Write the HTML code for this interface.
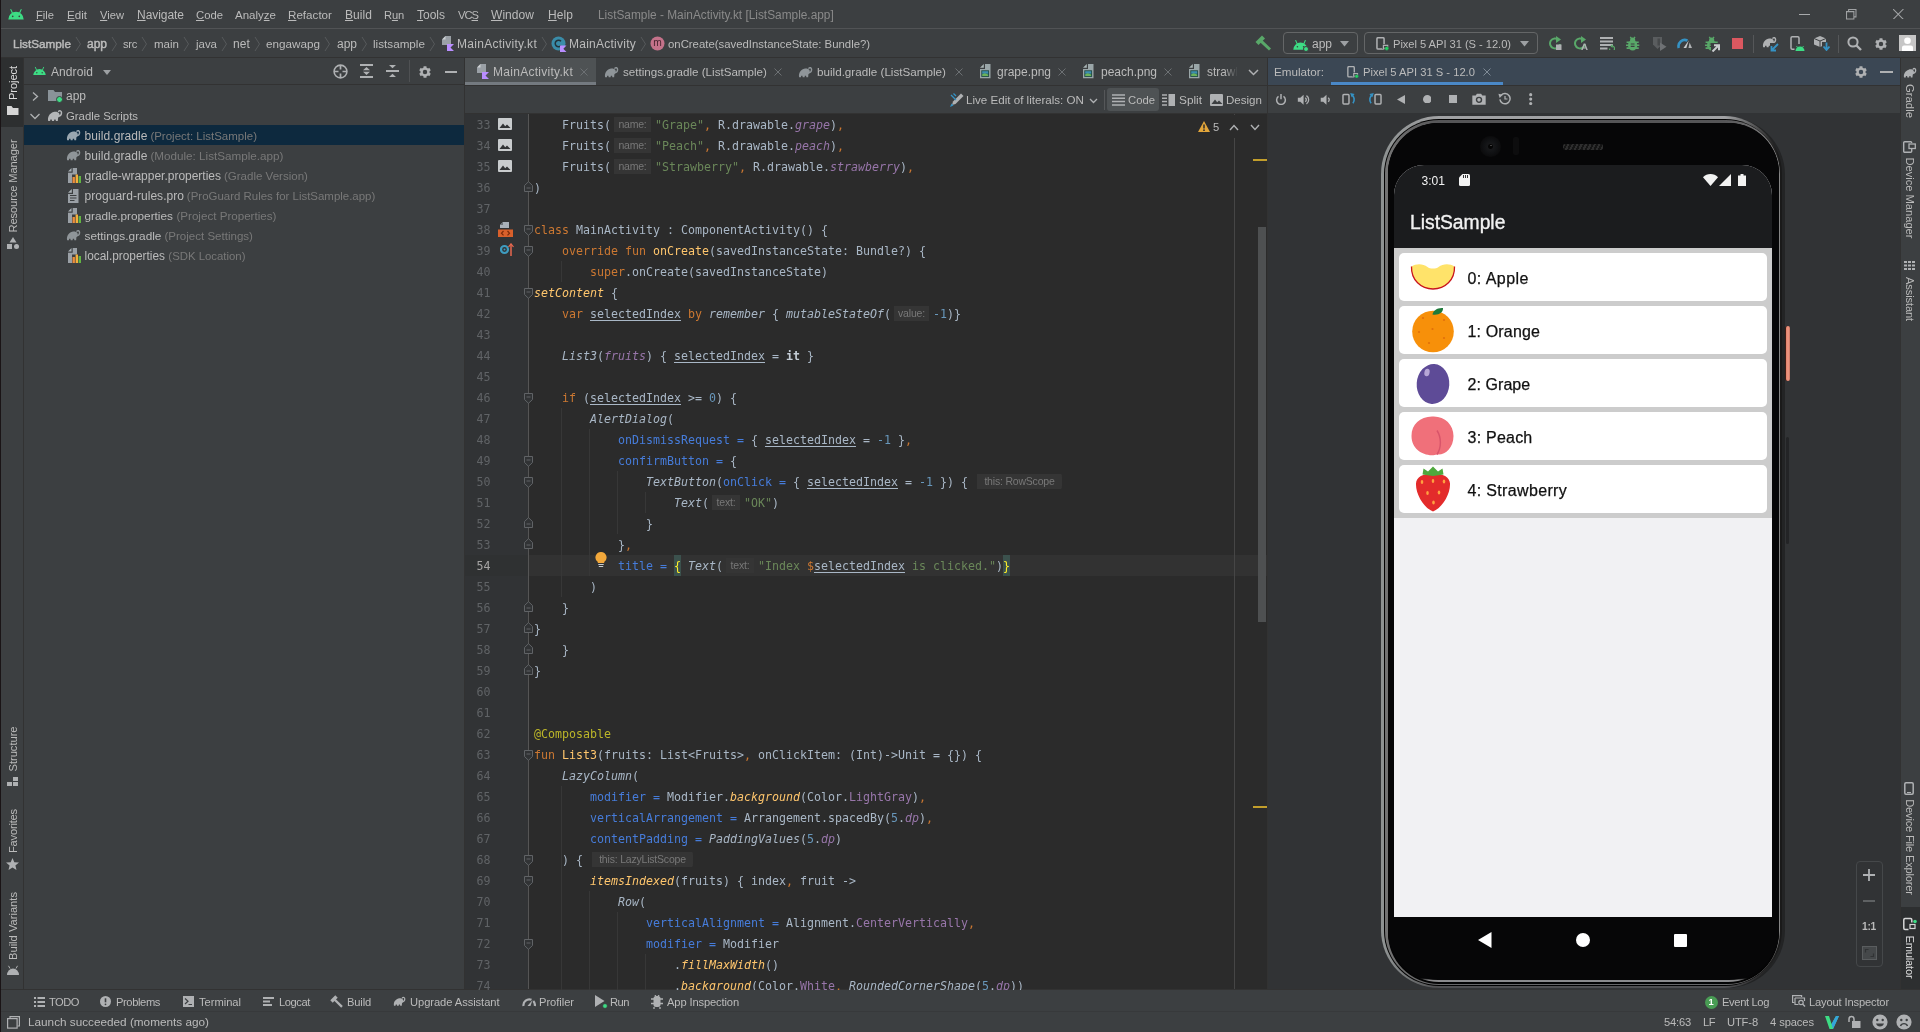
<!DOCTYPE html>
<html lang="en"><head><meta charset="utf-8"><title>ListSample - MainActivity.kt [ListSample.app]</title>
<style>
html,body{margin:0;padding:0}
body{width:1920px;height:1032px;overflow:hidden;position:relative;background:#3C3F41;
 font-family:"Liberation Sans",sans-serif;font-size:12px;color:#BBBBBB}
#app{position:absolute;left:0;top:0;width:1920px;height:1032px;overflow:hidden;will-change:transform}
#app div,#app span,#app svg{position:absolute}
#app span{white-space:pre}
#app span span, #app span u, #app span i, #app span b{position:static}
.b{font-weight:bold}
.m{font-family:"DejaVu Sans Mono","Liberation Mono",monospace}

.cl{left:534px;height:21px;line-height:23px;white-space:pre;color:#A9B7C6;font-family:"DejaVu Sans Mono","Liberation Mono",monospace;font-size:11.63px}
#app .cl span,#app .cl i,#app .cl u,#app .cl b{position:static}
.ln{left:465px;width:25.5px;text-align:right;height:21px;line-height:23px;color:#606366;font-family:"DejaVu Sans Mono","Liberation Mono",monospace;font-size:11.63px}
.k{color:#CC7832}.s{color:#6A8759}.n{color:#6897BB}.f{color:#FFC66D}.a{color:#BBB529}.na{color:#467CDA}
.p{color:#9876AA;font-style:italic}.pi{color:#9876AA}.i{font-style:italic}.fi{color:#FFC66D;font-style:italic}
.u{text-decoration:underline;text-underline-offset:2px}.it{font-weight:bold;color:#C4CDD6}
#app .cl span.h{display:inline-block;box-sizing:border-box;height:15px;line-height:15px;vertical-align:1px;text-align:center;color:#787878;
 font-family:"Liberation Sans",sans-serif;font-size:10.5px;letter-spacing:-0.2px;border-radius:3px;background-color:#353535;background-clip:content-box;text-indent:0}
#app .cl span.br{color:#FFEF28;background:#3B514D;display:inline-block;height:21px;line-height:23px;vertical-align:top}

.ph{font-family:"Liberation Sans",sans-serif}
</style></head>
<body><div id="app">
<div style="left:0px;top:0px;width:1920px;height:1032px;background:#3C3F41;"></div>
<div style="left:0px;top:28px;width:1920px;height:1px;background:#515355;"></div>
<div style="left:0px;top:57px;width:1920px;height:1px;background:#323232;"></div>
<div style="left:1px;top:58px;width:22px;height:931px;background:#3C3F41;"></div>
<div style="left:1px;top:58px;width:22px;height:69px;background:#2D2F30;"></div>
<div style="left:23px;top:58px;width:1px;height:931px;background:#323232;"></div>
<div style="left:24px;top:58px;width:440px;height:932px;background:#3C3F41;"></div>
<div style="left:24px;top:84px;width:440px;height:1px;background:#323232;"></div>
<div style="left:24px;top:125px;width:440px;height:20px;background:#0D293E;"></div>
<div style="left:464px;top:58px;width:1px;height:932px;background:#323232;"></div>
<div style="left:465px;top:58px;width:803px;height:27px;background:#3C3F41;"></div>
<div style="left:465px;top:58px;width:131px;height:27px;background:#4E5254;"></div>
<div style="left:465px;top:82px;width:131px;height:3px;background:#747A80;"></div>
<div style="left:465px;top:85px;width:803px;height:1px;background:#323232;"></div>
<div style="left:465px;top:86px;width:803px;height:27px;background:#3C3F41;"></div>
<div style="left:465px;top:113px;width:803px;height:1px;background:#323232;"></div>
<div style="left:465px;top:114px;width:803px;height:876px;background:#2B2B2B;"></div>
<div style="left:465px;top:114px;width:63px;height:876px;background:#313335;"></div>
<div style="left:528px;top:114px;width:1px;height:876px;background:#555555;"></div>
<div style="left:465px;top:555px;width:63px;height:21px;background:#2F3132;"></div>
<div style="left:529px;top:555px;width:705px;height:21px;background:#323232;"></div>
<div style="left:1234px;top:114px;width:1px;height:876px;background:#464646;"></div>
<div style="left:1235px;top:555px;width:33px;height:21px;background:#323232;"></div>
<div style="left:1258px;top:227px;width:8px;height:395px;background:#4E5051;"></div>
<div style="left:1253px;top:159px;width:14px;height:2px;background:#C29E2B;"></div>
<div style="left:1253px;top:806px;width:14px;height:2px;background:#C29E2B;"></div>
<div style="left:1267px;top:58px;width:1px;height:932px;background:#323232;"></div>
<div style="left:1268px;top:58px;width:632px;height:27px;background:#3B4754;"></div>
<div style="left:1331px;top:82px;width:172px;height:3px;background:#4A88C7;"></div>
<div style="left:1268px;top:85px;width:632px;height:1px;background:#323232;"></div>
<div style="left:1268px;top:86px;width:632px;height:27px;background:#3C3F41;"></div>
<div style="left:1268px;top:113px;width:632px;height:877px;background:#313335;"></div>
<div style="left:1900px;top:58px;width:1px;height:932px;background:#323232;"></div>
<div style="left:1901px;top:58px;width:19px;height:932px;background:#3C3F41;"></div>
<div style="left:1901px;top:907px;width:19px;height:83px;background:#2D2F30;"></div>
<div style="left:0px;top:989px;width:1920px;height:1px;background:#323232;"></div>
<div style="left:0px;top:990px;width:1920px;height:22px;background:#3C3F41;"></div>
<div style="left:0px;top:1011px;width:1920px;height:1px;background:#37393B;"></div>
<div style="left:0px;top:1012px;width:1920px;height:20px;background:#3C3F41;"></div>
<div style="left:0px;top:0px;width:1px;height:1032px;background:#1A1416;"></div>
<div style="left:0;top:114px;width:1268px;height:876px;overflow:hidden">
<div style="left:561px;top:147px;width:1px;height:21px;background:#373737"></div>
<div style="left:561px;top:294px;width:1px;height:189px;background:#373737"></div>
<div style="left:589px;top:315px;width:1px;height:147px;background:#373737"></div>
<div style="left:617px;top:357px;width:1px;height:63px;background:#373737"></div>
<div style="left:645px;top:378px;width:1px;height:21px;background:#373737"></div>
<div style="left:561px;top:672px;width:1px;height:210px;background:#373737"></div>
<div style="left:589px;top:777px;width:1px;height:105px;background:#373737"></div>
<div style="left:617px;top:798px;width:1px;height:84px;background:#373737"></div>
<div style="left:645px;top:840px;width:1px;height:42px;background:#373737"></div>
<span class="ln" style="top:0px;color:#606366">33</span>
<div class="cl" style="top:0px">    Fruits(<span class="h" style="width:44px;padding:0 4px 0 3px">name:</span><span class="s">"Grape"</span><span class="k">,</span> R.drawable.<span class="p">grape</span>)<span class="k">,</span></div>
<span class="ln" style="top:21px;color:#606366">34</span>
<div class="cl" style="top:21px">    Fruits(<span class="h" style="width:44px;padding:0 4px 0 3px">name:</span><span class="s">"Peach"</span><span class="k">,</span> R.drawable.<span class="p">peach</span>)<span class="k">,</span></div>
<span class="ln" style="top:42px;color:#606366">35</span>
<div class="cl" style="top:42px">    Fruits(<span class="h" style="width:44px;padding:0 4px 0 3px">name:</span><span class="s">"Strawberry"</span><span class="k">,</span> R.drawable.<span class="p">strawberry</span>)<span class="k">,</span></div>
<span class="ln" style="top:63px;color:#606366">36</span>
<div class="cl" style="top:63px">)</div>
<span class="ln" style="top:84px;color:#606366">37</span>
<span class="ln" style="top:105px;color:#606366">38</span>
<div class="cl" style="top:105px"><span class="k">class </span>MainActivity : ComponentActivity() {</div>
<span class="ln" style="top:126px;color:#606366">39</span>
<div class="cl" style="top:126px"><span class="k">    override fun </span><span class="f">onCreate</span>(savedInstanceState: Bundle?) {</div>
<span class="ln" style="top:147px;color:#606366">40</span>
<div class="cl" style="top:147px"><span class="k">        super</span>.onCreate(savedInstanceState)</div>
<span class="ln" style="top:168px;color:#606366">41</span>
<div class="cl" style="top:168px"><span class="fi">setContent</span> {</div>
<span class="ln" style="top:189px;color:#606366">42</span>
<div class="cl" style="top:189px"><span class="k">    var </span><span class="u">selectedIndex</span><span class="k"> by </span><span class="i">remember</span> { <span class="i">mutableStateOf</span>(<span class="h" style="width:42px;padding:0 4px 0 3px">value:</span><span class="n">-1</span>)}</div>
<span class="ln" style="top:210px;color:#606366">43</span>
<span class="ln" style="top:231px;color:#606366">44</span>
<div class="cl" style="top:231px">    <span class="i">List3</span>(<span class="p">fruits</span>) { <span class="u">selectedIndex</span> = <span class="it">it</span> }</div>
<span class="ln" style="top:252px;color:#606366">45</span>
<span class="ln" style="top:273px;color:#606366">46</span>
<div class="cl" style="top:273px"><span class="k">    if </span>(<span class="u">selectedIndex</span> &gt;= <span class="n">0</span>) {</div>
<span class="ln" style="top:294px;color:#606366">47</span>
<div class="cl" style="top:294px">        <span class="i">AlertDialog</span>(</div>
<span class="ln" style="top:315px;color:#606366">48</span>
<div class="cl" style="top:315px"><span class="na">            onDismissRequest =</span> { <span class="u">selectedIndex</span> = <span class="n">-1</span> }<span class="k">,</span></div>
<span class="ln" style="top:336px;color:#606366">49</span>
<div class="cl" style="top:336px"><span class="na">            confirmButton =</span> {</div>
<span class="ln" style="top:357px;color:#606366">50</span>
<div class="cl" style="top:357px">                <span class="i">TextButton</span>(<span class="na">onClick =</span> { <span class="u">selectedIndex</span> = <span class="n">-1</span> }) {<span class="h" style="width:96px;padding:0 2px 0 9px">this: RowScope</span></div>
<span class="ln" style="top:378px;color:#606366">51</span>
<div class="cl" style="top:378px">                    <span class="i">Text</span>(<span class="h" style="width:35px;padding:0 4px 0 3px">text:</span><span class="s">"OK"</span>)</div>
<span class="ln" style="top:399px;color:#606366">52</span>
<div class="cl" style="top:399px">                }</div>
<span class="ln" style="top:420px;color:#606366">53</span>
<div class="cl" style="top:420px">            }<span class="k">,</span></div>
<span class="ln" style="top:441px;color:#A4A3A3">54</span>
<div class="cl" style="top:441px"><span class="na">            title =</span> <span class="br">{</span> <span class="i">Text</span>(<span class="h" style="width:35px;padding:0 4px 0 3px">text:</span><span class="s">"Index </span><span class="k">$</span><span class="u">selectedIndex</span><span class="s"> is clicked."</span>)<span class="br">}</span></div>
<span class="ln" style="top:462px;color:#606366">55</span>
<div class="cl" style="top:462px">        )</div>
<span class="ln" style="top:483px;color:#606366">56</span>
<div class="cl" style="top:483px">    }</div>
<span class="ln" style="top:504px;color:#606366">57</span>
<div class="cl" style="top:504px">}</div>
<span class="ln" style="top:525px;color:#606366">58</span>
<div class="cl" style="top:525px">    }</div>
<span class="ln" style="top:546px;color:#606366">59</span>
<div class="cl" style="top:546px">}</div>
<span class="ln" style="top:567px;color:#606366">60</span>
<span class="ln" style="top:588px;color:#606366">61</span>
<span class="ln" style="top:609px;color:#606366">62</span>
<div class="cl" style="top:609px"><span class="a">@Composable</span></div>
<span class="ln" style="top:630px;color:#606366">63</span>
<div class="cl" style="top:630px"><span class="k">fun </span><span class="f">List3</span>(fruits: List&lt;Fruits&gt;<span class="k">,</span> onClickItem: (Int)-&gt;Unit = {}) {</div>
<span class="ln" style="top:651px;color:#606366">64</span>
<div class="cl" style="top:651px">    <span class="i">LazyColumn</span>(</div>
<span class="ln" style="top:672px;color:#606366">65</span>
<div class="cl" style="top:672px"><span class="na">        modifier =</span> Modifier.<span class="fi">background</span>(Color.<span class="pi">LightGray</span>)<span class="k">,</span></div>
<span class="ln" style="top:693px;color:#606366">66</span>
<div class="cl" style="top:693px"><span class="na">        verticalArrangement =</span> Arrangement.spacedBy(<span class="n">5</span>.<span class="p">dp</span>)<span class="k">,</span></div>
<span class="ln" style="top:714px;color:#606366">67</span>
<div class="cl" style="top:714px"><span class="na">        contentPadding =</span> <span class="i">PaddingValues</span>(<span class="n">5</span>.<span class="p">dp</span>)</div>
<span class="ln" style="top:735px;color:#606366">68</span>
<div class="cl" style="top:735px">    ) {<span class="h" style="width:112px;padding:0 2px 0 9px">this: LazyListScope</span></div>
<span class="ln" style="top:756px;color:#606366">69</span>
<div class="cl" style="top:756px">        <span class="fi">itemsIndexed</span>(fruits) { index<span class="k">,</span> fruit -&gt;</div>
<span class="ln" style="top:777px;color:#606366">70</span>
<div class="cl" style="top:777px">            <span class="i">Row</span>(</div>
<span class="ln" style="top:798px;color:#606366">71</span>
<div class="cl" style="top:798px"><span class="na">                verticalAlignment =</span> Alignment.<span class="pi">CenterVertically</span><span class="k">,</span></div>
<span class="ln" style="top:819px;color:#606366">72</span>
<div class="cl" style="top:819px"><span class="na">                modifier =</span> Modifier</div>
<span class="ln" style="top:840px;color:#606366">73</span>
<div class="cl" style="top:840px">                    .<span class="fi">fillMaxWidth</span>()</div>
<span class="ln" style="top:861px;color:#606366">74</span>
<div class="cl" style="top:861px">                    .<span class="fi">background</span>(Color.<span class="pi">White</span><span class="k">,</span> <span class="i">RoundedCornerShape</span>(<span class="n">5</span>.<span class="p">dp</span>))</div>
</div>
<svg style="left:8px;top:8.3px;" width="16" height="11.5" viewBox="0 0 16 11.500"><path d="M.3 11.500a7.700 7.700 0 0 1 15.400 0z" fill="#3DDC84"/><path d="M4.400 5 2.900 1.600M11.600 5l1.500-3.400" stroke="#3DDC84" stroke-width="1.100" stroke-linecap="round"/><circle cx="4.700" cy="8.300" r=".85" fill="#3C3F41"/><circle cx="11.300" cy="8.300" r=".85" fill="#3C3F41"/></svg>
<div style="left:1799px;top:14px;width:10.5px;height:1px;background:#A8AAAC;"></div>
<svg style="left:1846px;top:9px;" width="10.5" height="10.5" viewBox="0 0 10 10"><path d="M.5 2.500h7v7h-7zM2.500 2.500v-2h7v7h-2" fill="none" stroke="#A0A2A4" stroke-width="1"/></svg>
<svg style="left:1893px;top:8.8px;" width="10.5" height="10.5" viewBox="0 0 10 10"><path d="M0 0l10 10M10 0L0 10" stroke="#A0A2A4" stroke-width="1"/></svg>
<svg style="left:75px;top:36px;" width="7" height="16" viewBox="0 0 7 16"><path d="M1 1 5.5 8 1 15" fill="none" stroke="#56595B" stroke-width="1"/></svg>
<svg style="left:111px;top:36px;" width="7" height="16" viewBox="0 0 7 16"><path d="M1 1 5.5 8 1 15" fill="none" stroke="#56595B" stroke-width="1"/></svg>
<svg style="left:141px;top:36px;" width="7" height="16" viewBox="0 0 7 16"><path d="M1 1 5.5 8 1 15" fill="none" stroke="#56595B" stroke-width="1"/></svg>
<svg style="left:183px;top:36px;" width="7" height="16" viewBox="0 0 7 16"><path d="M1 1 5.5 8 1 15" fill="none" stroke="#56595B" stroke-width="1"/></svg>
<svg style="left:221px;top:36px;" width="7" height="16" viewBox="0 0 7 16"><path d="M1 1 5.5 8 1 15" fill="none" stroke="#56595B" stroke-width="1"/></svg>
<svg style="left:254px;top:36px;" width="7" height="16" viewBox="0 0 7 16"><path d="M1 1 5.5 8 1 15" fill="none" stroke="#56595B" stroke-width="1"/></svg>
<svg style="left:324px;top:36px;" width="7" height="16" viewBox="0 0 7 16"><path d="M1 1 5.5 8 1 15" fill="none" stroke="#56595B" stroke-width="1"/></svg>
<svg style="left:361px;top:36px;" width="7" height="16" viewBox="0 0 7 16"><path d="M1 1 5.5 8 1 15" fill="none" stroke="#56595B" stroke-width="1"/></svg>
<svg style="left:429px;top:36px;" width="7" height="16" viewBox="0 0 7 16"><path d="M1 1 5.5 8 1 15" fill="none" stroke="#56595B" stroke-width="1"/></svg>
<svg style="left:541px;top:36px;" width="7" height="16" viewBox="0 0 7 16"><path d="M1 1 5.5 8 1 15" fill="none" stroke="#56595B" stroke-width="1"/></svg>
<svg style="left:640px;top:36px;" width="7" height="16" viewBox="0 0 7 16"><path d="M1 1 5.5 8 1 15" fill="none" stroke="#56595B" stroke-width="1"/></svg>
<svg style="left:441px;top:36px;" width="14" height="15" viewBox="0 0 14 15"><path d="M4.5 0H10v9H1V3.500z" fill="#9AA0A6"/><path d="M4.500 0v3.500H1z" fill="#CDD1D4"/><path d="M6 8h7l-3.500 3.500L13 15H6z" fill="#B98EFF"/></svg>
<svg style="left:551px;top:36px;" width="16" height="16" viewBox="0 0 16 16"><circle cx="7.500" cy="7.500" r="7" fill="#3A8CA8"/><path d="M10 5.300A3.300 3.300 0 1 0 10 9.700" fill="none" stroke="#22333A" stroke-width="1.500"/><path d="M9 9.500h6.500l-3.200 3.200 3.200 3.300H9z" fill="#B98EFF"/></svg>
<svg style="left:650px;top:36px;" width="15" height="15" viewBox="0 0 15 15"><circle cx="7.500" cy="7.500" r="7" fill="#C4728A"/></svg>
<span id="t0" style="left:653.2px;top:35px;line-height:16px;font-size:10.23px;color:#4A2530;letter-spacing:-0.030px;">m</span>
<svg style="left:1255px;top:35px;" width="17" height="16" viewBox="0 0 17 16"><path d="M2 8.500 8.500 2" stroke="#59A869" stroke-width="4.200"/><path d="M5.800 5.800 15 14.500" stroke="#59A869" stroke-width="3"/></svg>
<div style="left:1283px;top:32px;width:75px;height:22px;background:transparent;border:1px solid #646667;border-radius:4px;box-sizing:border-box"></div>
<div style="left:1364px;top:32px;width:174px;height:22px;background:transparent;border:1px solid #646667;border-radius:4px;box-sizing:border-box"></div>
<svg style="left:1293px;top:39px;" width="15" height="10.78125" viewBox="0 0 16 11.500"><path d="M.3 11.500a7.700 7.700 0 0 1 15.400 0z" fill="#3DDC84"/><path d="M4.400 5 2.900 1.600M11.600 5l1.500-3.400" stroke="#3DDC84" stroke-width="1.100" stroke-linecap="round"/><circle cx="4.700" cy="8.300" r=".85" fill="#3C3F41"/><circle cx="11.300" cy="8.300" r=".85" fill="#3C3F41"/></svg>
<svg style="left:1303px;top:46px;" width="6" height="6" viewBox="0 0 6 6"><circle cx="3" cy="3" r="2.500" fill="#3DDC84" stroke="#3C3F41" stroke-width="1"/></svg>
<svg style="left:1339.5px;top:41px;" width="9" height="5.5" viewBox="0 0 9 5.5"><path d="M0 0H9L4.5 5.5z" fill="#9DA0A3"/></svg>
<svg style="left:1376px;top:36.8px;" width="13.3" height="13.775000000000002" viewBox="0 0 14 14.500"><rect x="1" y=".75" width="7.500" height="12" rx="1.200" fill="none" stroke="#AFB1B3" stroke-width="1.600"/><rect x="6.500" y="7.500" width="6.500" height="5" fill="#3C3F41"/><rect x="7.800" y="8.800" width="4.500" height="3.200" fill="none" stroke="#AFB1B3" stroke-width="1.300"/><circle cx="11.300" cy="12" r="2.100" fill="#23D160" stroke="#3C3F41" stroke-width=".5"/></svg>
<svg style="left:1519.5px;top:41px;" width="9" height="5.5" viewBox="0 0 9 5.5"><path d="M0 0H9L4.5 5.5z" fill="#9DA0A3"/></svg>
<svg style="left:1548px;top:36px;" width="14" height="14" viewBox="0 0 14 14"><path d="M10.500 3.800A5 5 0 1 0 12 8" fill="none" stroke="#59A869" stroke-width="2"/><path d="M8 0l5 3.500L8 7z" fill="#59A869"/><rect x="8" y="8.500" width="5.500" height="5.500" fill="#AFB1B3"/></svg>
<svg style="left:1573px;top:36px;" width="15" height="14" viewBox="0 0 15 14"><path d="M10.500 3.800A5 5 0 1 0 12 8" fill="none" stroke="#59A869" stroke-width="2"/><path d="M8 0l5 3.500L8 7z" fill="#59A869"/><path d="M8.200 14 10.700 7.500h1.600L14.800 14h-1.500l-.5-1.400h-2.600L9.700 14zM10.600 11.400h1.800l-.9-2.500z" fill="#AFB1B3"/></svg>
<svg style="left:1600px;top:37px;" width="15" height="13" viewBox="0 0 15 13"><path d="M0 1h13M0 4.500h13M0 8h13M0 11.500h7.500" stroke="#AFB1B3" stroke-width="1.800"/><path d="M9.500 11.500a2.500 2.500 0 1 0 2.500-2.500" fill="none" stroke="#59A869" stroke-width="1.200"/><path d="M12.500 7 10.300 9l2.200 2z" fill="#59A869"/></svg>
<svg style="left:1626.3px;top:36px;" width="13.3" height="15" viewBox="0 0 14 15"><path d="M4.500 .500 6.200 3M9.500 .500 7.800 3" stroke="#59A869" stroke-width="1.400" fill="none"/><circle cx="7" cy="4" r="2.700" fill="#59A869"/><ellipse cx="7" cy="9.300" rx="4.900" ry="5.500" fill="#59A869"/><path d="M.6 6.200h3.500M0 9.300h3.500M.6 12.400h3.500M13.400 6.200h-3.500M14 9.300h-3.500M13.400 12.400h-3.500" stroke="#59A869" stroke-width="1.700"/><path d="M5 8h4M5 10.600h4" stroke="#3C3F41" stroke-width="1.200"/></svg>
<svg style="left:1652px;top:36px;" width="15" height="15" viewBox="0 0 15 15"><path d="M1 1h9v7.500L5.500 13 1 8.500z" fill="#5A5D5F"/><rect x="5.500" y="2.500" width="2.500" height="7" fill="#46494B"/><path d="M8 6.500 14.500 10.700 8 15z" fill="#6E7174"/></svg>
<svg style="left:1677px;top:37px;" width="16" height="12" viewBox="0 0 16 12"><path d="M1.800 11A6.200 6.200 0 0 1 10.500 3.600" fill="none" stroke="#3592C4" stroke-width="2.600"/><path d="M6.500 11 11.800 3.200 9.300 11z" fill="#C9CCCE"/><path d="M12.600 5.500 15 11h-3.500z" fill="#AFB1B3"/></svg>
<svg style="left:1704.5px;top:36px;" width="13.3" height="15" viewBox="0 0 14 15"><path d="M4.500 .500 6.200 3M9.500 .500 7.800 3" stroke="#59A869" stroke-width="1.400" fill="none"/><circle cx="7" cy="4" r="2.700" fill="#59A869"/><ellipse cx="7" cy="9.300" rx="4.900" ry="5.500" fill="#59A869"/><path d="M.6 6.200h3.500M0 9.300h3.500M.6 12.400h3.500M13.400 6.200h-3.500M14 9.300h-3.500M13.400 12.400h-3.500" stroke="#59A869" stroke-width="1.700"/><path d="M5 8h4M5 10.600h4" stroke="#3C3F41" stroke-width="1.200"/></svg>
<svg style="left:1711px;top:43px;" width="9" height="9" viewBox="0 0 9 9"><rect width="9" height="9" fill="#3C3F41"/><path d="M1.500 8.500 7 3M3 2.200h5v5" stroke="#C9CCCE" stroke-width="2" fill="none"/></svg>
<div style="left:1732px;top:38px;width:10.5px;height:10.5px;background:#DB5860;"></div>
<div style="left:1753px;top:35px;width:1px;height:18px;background:#555759;"></div>
<svg style="left:1762px;top:36px;" width="15" height="11.71875" viewBox="0 0 16 12.500"><path d="M1.200 12C.4 8 2.500 4.300 6.500 3c2.200-.7 4.600-.2 5.600 1.300.9 1.400.6 3.400-1 4.500L10.800 12H8.900l-.3-1.600H7.300L7 12H5l-.3-1.600H3.400L3.100 12z" fill="#AFB1B3"/><path d="M10.600 7.300c2.300-.1 3.900-1.700 3.900-3.600 0-1.900-2-2.600-2.900-1.300" fill="none" stroke="#AFB1B3" stroke-width="1.500" stroke-linecap="round"/></svg>
<svg style="left:1770px;top:43px;" width="9" height="9" viewBox="0 0 9 9"><rect width="9" height="9" fill="#3C3F41"/><path d="M8 1 2 7M1.500 3v4.500H6" stroke="#3592C4" stroke-width="1.800" fill="none"/></svg>
<svg style="left:1790px;top:36px;" width="15" height="15" viewBox="0 0 15 15"><rect x="1" y=".75" width="8" height="12.500" rx="1.200" fill="none" stroke="#AFB1B3" stroke-width="1.500"/><rect x="4.500" y="8" width="10.500" height="7" fill="#3C3F41"/><path d="M5.500 15a4.500 4.500 0 0 1 9 0z" fill="#3DDC84"/><path d="M7.500 11.500 6.500 10M12.500 11.500l1-1.500" stroke="#3DDC84" stroke-width=".9"/></svg>
<svg style="left:1814px;top:36px;" width="16" height="15" viewBox="0 0 16 15"><path d="M6 0l6 2.500v6L6 11 0 8.500v-6z" fill="#AFB1B3"/><path d="M6 5v6M0 2.500 6 5l6-2.500" stroke="#3C3F41" stroke-width="1" fill="none"/><rect x="8" y="6" width="8" height="9" fill="#3C3F41"/><path d="M12.500 6.500v7M9.500 10.500l3 3.500 3-3.500" stroke="#3592C4" stroke-width="1.800" fill="none"/></svg>
<div style="left:1838px;top:35px;width:1px;height:18px;background:#555759;"></div>
<svg style="left:1847px;top:36px;" width="15" height="15" viewBox="0 0 15 15"><circle cx="6" cy="6" r="4.600" fill="none" stroke="#AFB1B3" stroke-width="2"/><path d="M9.500 9.500 14 14" stroke="#AFB1B3" stroke-width="2.400"/></svg>
<svg style="left:1874px;top:36.5px;" width="14" height="14" viewBox="0 0 16 16"><rect x="6.300" y="1.300" width="3.400" height="3.200" rx=".3" transform="rotate(0 8 8)" fill="#AFB1B3"/><rect x="6.300" y="1.300" width="3.400" height="3.200" rx=".3" transform="rotate(60 8 8)" fill="#AFB1B3"/><rect x="6.300" y="1.300" width="3.400" height="3.200" rx=".3" transform="rotate(120 8 8)" fill="#AFB1B3"/><rect x="6.300" y="1.300" width="3.400" height="3.200" rx=".3" transform="rotate(180 8 8)" fill="#AFB1B3"/><rect x="6.300" y="1.300" width="3.400" height="3.200" rx=".3" transform="rotate(240 8 8)" fill="#AFB1B3"/><rect x="6.300" y="1.300" width="3.400" height="3.200" rx=".3" transform="rotate(300 8 8)" fill="#AFB1B3"/><circle cx="8" cy="8" r="3.900" fill="none" stroke="#AFB1B3" stroke-width="2.700"/></svg>
<svg style="left:1899px;top:35px;" width="17" height="16" viewBox="0 0 17 16"><rect width="17" height="16" fill="#C6C6C6"/><circle cx="8.500" cy="5.800" r="3.300" fill="#FFFFFF"/><path d="M3 16v-3.500a2 2 0 0 1 2-2h7a2 2 0 0 1 2 2V16z" fill="#FFFFFF"/></svg>
<svg style="left:33px;top:66px;" width="13" height="9.34375" viewBox="0 0 16 11.500"><path d="M.3 11.500a7.700 7.700 0 0 1 15.400 0z" fill="#3DDC84"/><path d="M4.400 5 2.900 1.600M11.600 5l1.500-3.400" stroke="#3DDC84" stroke-width="1.100" stroke-linecap="round"/><circle cx="4.700" cy="8.300" r=".85" fill="#3C3F41"/><circle cx="11.300" cy="8.300" r=".85" fill="#3C3F41"/></svg>
<svg style="left:103px;top:69.5px;" width="8" height="5" viewBox="0 0 8 5"><path d="M0 0H8L4.0 5z" fill="#9DA0A3"/></svg>
<svg style="left:333px;top:64px;" width="15" height="15" viewBox="0 0 15 15"><circle cx="7.500" cy="7.500" r="6.400" fill="none" stroke="#AFB1B3" stroke-width="1.600"/><path d="M7.500 1.500v4M7.500 9.500v4M1.500 7.500h4M9.500 7.500h4" stroke="#AFB1B3" stroke-width="1.700"/></svg>
<svg style="left:359.5px;top:64px;" width="13" height="14" viewBox="0 0 13 14"><path d="M0 1h13M0 13h13" stroke="#AFB1B3" stroke-width="2"/><path d="M6.500 3 10 6.200H3zM6.500 11 3 7.800h7z" fill="#AFB1B3"/></svg>
<svg style="left:385.5px;top:65px;" width="13" height="12" viewBox="0 0 13 12"><path d="M0 6h13" stroke="#AFB1B3" stroke-width="2"/><path d="M6.500 3.300 3 0h7zM6.500 8.700 10 12H3z" fill="#AFB1B3"/></svg>
<div style="left:409px;top:60px;width:1px;height:22px;background:#4F5153;"></div>
<svg style="left:418px;top:65px;" width="14" height="14" viewBox="0 0 16 16"><rect x="6.300" y="1.300" width="3.400" height="3.200" rx=".3" transform="rotate(0 8 8)" fill="#AFB1B3"/><rect x="6.300" y="1.300" width="3.400" height="3.200" rx=".3" transform="rotate(60 8 8)" fill="#AFB1B3"/><rect x="6.300" y="1.300" width="3.400" height="3.200" rx=".3" transform="rotate(120 8 8)" fill="#AFB1B3"/><rect x="6.300" y="1.300" width="3.400" height="3.200" rx=".3" transform="rotate(180 8 8)" fill="#AFB1B3"/><rect x="6.300" y="1.300" width="3.400" height="3.200" rx=".3" transform="rotate(240 8 8)" fill="#AFB1B3"/><rect x="6.300" y="1.300" width="3.400" height="3.200" rx=".3" transform="rotate(300 8 8)" fill="#AFB1B3"/><circle cx="8" cy="8" r="3.900" fill="none" stroke="#AFB1B3" stroke-width="2.700"/></svg>
<div style="left:445px;top:71px;width:12px;height:2px;background:#AFB1B3;"></div>
<svg style="left:32px;top:92px;" width="7" height="9" viewBox="0 0 7 9"><path d="M1 .500 5.500 4.500 1 8.500" fill="none" stroke="#AFB1B3" stroke-width="1.300"/></svg>
<svg style="left:30px;top:113px;" width="10" height="7" viewBox="0 0 10 7"><path d="M.5 1 5 5.500 9.500 1" fill="none" stroke="#AFB1B3" stroke-width="1.300"/></svg>
<svg style="left:48px;top:89px;" width="15" height="14" viewBox="0 0 15 14"><path d="M0 1h5.500l1.500 2H14v9H0z" fill="#8A9399"/><circle cx="11.500" cy="10.500" r="3" fill="#3DDC84" stroke="#3C3F41" stroke-width="1"/></svg>
<svg style="left:47px;top:109px;" width="16" height="12.5" viewBox="0 0 16 12.500"><path d="M1.200 12C.4 8 2.500 4.300 6.500 3c2.200-.7 4.600-.2 5.600 1.300.9 1.400.6 3.400-1 4.500L10.800 12H8.900l-.3-1.600H7.300L7 12H5l-.3-1.600H3.400L3.100 12z" fill="#B4B6B8"/><path d="M10.600 7.300c2.300-.1 3.900-1.700 3.900-3.600 0-1.900-2-2.600-2.900-1.300" fill="none" stroke="#B4B6B8" stroke-width="1.500" stroke-linecap="round"/></svg>
<svg style="left:66px;top:129px;" width="15" height="11.71875" viewBox="0 0 16 12.500"><path d="M1.200 12C.4 8 2.500 4.300 6.500 3c2.200-.7 4.600-.2 5.600 1.300.9 1.400.6 3.400-1 4.500L10.800 12H8.900l-.3-1.600H7.300L7 12H5l-.3-1.600H3.400L3.100 12z" fill="#9AA7B0"/><path d="M10.600 7.300c2.300-.1 3.900-1.700 3.900-3.600 0-1.900-2-2.600-2.900-1.300" fill="none" stroke="#9AA7B0" stroke-width="1.500" stroke-linecap="round"/></svg>
<svg style="left:66px;top:149px;" width="15" height="11.71875" viewBox="0 0 16 12.500"><path d="M1.200 12C.4 8 2.500 4.300 6.500 3c2.200-.7 4.600-.2 5.600 1.300.9 1.400.6 3.400-1 4.500L10.800 12H8.900l-.3-1.600H7.300L7 12H5l-.3-1.600H3.400L3.100 12z" fill="#8F9599"/><path d="M10.600 7.300c2.300-.1 3.900-1.700 3.900-3.600 0-1.900-2-2.600-2.900-1.300" fill="none" stroke="#8F9599" stroke-width="1.500" stroke-linecap="round"/></svg>
<svg style="left:67px;top:168px;" width="14" height="15" viewBox="0 0 14 15"><path d="M1 3.500 4.500 0V3.500z" fill="#A9B0B5"/><path d="M5.700 0H10v6.500H5V15H1V4.700h4.700z" fill="#9AA0A6"/><rect x="5.500" y="9" width="2.400" height="6" fill="#EC8E3C"/><rect x="8.600" y="6.500" width="2.400" height="8.500" fill="#F4AF3D"/><rect x="11.600" y="8" width="2.400" height="7" fill="#62B543"/></svg>
<svg style="left:68px;top:189px;" width="11" height="14" viewBox="0 0 11 14"><path d="M0 3.800 3.800 0V3.800z" fill="#A9B0B5"/><path d="M5 0h5.500v14H0V5h5z" fill="#9AA0A6"/><path d="M2 6.500h6.500M2 9h6.500M2 11.500h4.500" stroke="#3C3F41" stroke-width="1.100"/></svg>
<svg style="left:67px;top:208px;" width="14" height="15" viewBox="0 0 14 15"><path d="M1 3.500 4.500 0V3.500z" fill="#A9B0B5"/><path d="M5.700 0H10v6.500H5V15H1V4.700h4.700z" fill="#9AA0A6"/><rect x="5.500" y="9" width="2.400" height="6" fill="#EC8E3C"/><rect x="8.600" y="6.500" width="2.400" height="8.500" fill="#F4AF3D"/><rect x="11.600" y="8" width="2.400" height="7" fill="#62B543"/></svg>
<svg style="left:66px;top:229px;" width="15" height="11.71875" viewBox="0 0 16 12.500"><path d="M1.200 12C.4 8 2.500 4.300 6.500 3c2.200-.7 4.600-.2 5.600 1.300.9 1.400.6 3.400-1 4.500L10.800 12H8.900l-.3-1.600H7.300L7 12H5l-.3-1.600H3.400L3.100 12z" fill="#8F9599"/><path d="M10.600 7.300c2.300-.1 3.900-1.700 3.900-3.600 0-1.900-2-2.600-2.900-1.300" fill="none" stroke="#8F9599" stroke-width="1.500" stroke-linecap="round"/></svg>
<svg style="left:67px;top:248px;" width="14" height="15" viewBox="0 0 14 15"><path d="M1 3.500 4.500 0V3.500z" fill="#A9B0B5"/><path d="M5.700 0H10v6.500H5V15H1V4.700h4.700z" fill="#9AA0A6"/><rect x="5.500" y="9" width="2.400" height="6" fill="#EC8E3C"/><rect x="8.600" y="6.500" width="2.400" height="8.500" fill="#F4AF3D"/><rect x="11.600" y="8" width="2.400" height="7" fill="#62B543"/></svg>
<svg style="left:476px;top:64px;" width="14" height="15" viewBox="0 0 14 15"><path d="M4.5 0H10v9H1V3.500z" fill="#9AA0A6"/><path d="M4.500 0v3.500H1z" fill="#CDD1D4"/><path d="M6 8h7l-3.500 3.500L13 15H6z" fill="#B98EFF"/></svg>
<svg style="left:580px;top:68px;" width="8" height="8" viewBox="0 0 8 8"><path d="M.5.500l7 7M7.500.500l-7 7" stroke="#6C7073" stroke-width="1"/></svg>
<svg style="left:604px;top:66px;" width="15" height="11.71875" viewBox="0 0 16 12.500"><path d="M1.200 12C.4 8 2.500 4.300 6.500 3c2.200-.7 4.600-.2 5.600 1.300.9 1.400.6 3.400-1 4.500L10.800 12H8.900l-.3-1.600H7.300L7 12H5l-.3-1.600H3.400L3.100 12z" fill="#8F9599"/><path d="M10.600 7.300c2.300-.1 3.900-1.700 3.900-3.600 0-1.900-2-2.600-2.900-1.300" fill="none" stroke="#8F9599" stroke-width="1.500" stroke-linecap="round"/></svg>
<svg style="left:774px;top:68px;" width="8" height="8" viewBox="0 0 8 8"><path d="M.5.500l7 7M7.500.500l-7 7" stroke="#6C7073" stroke-width="1"/></svg>
<svg style="left:798px;top:66px;" width="15" height="11.71875" viewBox="0 0 16 12.500"><path d="M1.200 12C.4 8 2.500 4.300 6.500 3c2.200-.7 4.600-.2 5.600 1.300.9 1.400.6 3.400-1 4.500L10.800 12H8.900l-.3-1.600H7.300L7 12H5l-.3-1.600H3.400L3.100 12z" fill="#8F9599"/><path d="M10.600 7.300c2.300-.1 3.900-1.700 3.900-3.600 0-1.900-2-2.600-2.900-1.300" fill="none" stroke="#8F9599" stroke-width="1.500" stroke-linecap="round"/></svg>
<svg style="left:955px;top:68px;" width="8" height="8" viewBox="0 0 8 8"><path d="M.5.500l7 7M7.500.500l-7 7" stroke="#6C7073" stroke-width="1"/></svg>
<svg style="left:980px;top:64px;" width="11" height="14.5" viewBox="0 0 11 14.5"><path d="M0 3.800 3.800 0V3.800z" fill="#A9B5B5"/><path d="M5 0h5.500v14.300H0V5h5z" fill="#9AA6A8"/><rect x="1.300" y="6.300" width="7.800" height="6.600" fill="#1F4B45"/><rect x="2.200" y="7.200" width="6" height="2.500" fill="#3E8FB0"/><path d="M2.200 12v-1.800l2.500-1 3.500 1.300V12z" fill="#6BB25A"/></svg>
<svg style="left:1058px;top:68px;" width="8" height="8" viewBox="0 0 8 8"><path d="M.5.500l7 7M7.500.500l-7 7" stroke="#6C7073" stroke-width="1"/></svg>
<svg style="left:1083px;top:64px;" width="11" height="14.5" viewBox="0 0 11 14.5"><path d="M0 3.800 3.800 0V3.800z" fill="#A9B5B5"/><path d="M5 0h5.500v14.300H0V5h5z" fill="#9AA6A8"/><rect x="1.300" y="6.300" width="7.800" height="6.600" fill="#1F4B45"/><rect x="2.200" y="7.200" width="6" height="2.500" fill="#3E8FB0"/><path d="M2.200 12v-1.800l2.500-1 3.500 1.300V12z" fill="#6BB25A"/></svg>
<svg style="left:1164px;top:68px;" width="8" height="8" viewBox="0 0 8 8"><path d="M.5.500l7 7M7.500.500l-7 7" stroke="#6C7073" stroke-width="1"/></svg>
<svg style="left:1189px;top:64px;" width="11" height="14.5" viewBox="0 0 11 14.5"><path d="M0 3.800 3.800 0V3.800z" fill="#A9B5B5"/><path d="M5 0h5.500v14.300H0V5h5z" fill="#9AA6A8"/><rect x="1.300" y="6.300" width="7.800" height="6.600" fill="#1F4B45"/><rect x="2.200" y="7.200" width="6" height="2.500" fill="#3E8FB0"/><path d="M2.200 12v-1.800l2.500-1 3.500 1.300V12z" fill="#6BB25A"/></svg>
<svg style="left:1248px;top:69px;" width="11" height="7" viewBox="0 0 11 7"><path d="M1 1 5.500 5.500 10 1" fill="none" stroke="#AFB1B3" stroke-width="1.500"/></svg>
<svg style="left:950px;top:93px;" width="14" height="14" viewBox="0 0 14 14"><path d="M3 8.500 11 .500l2.500 2.500-8 8-3.500 1z" fill="#AFB1B3"/><path d="M1 2l5 5M3.500 .500 6 3" stroke="#3592C4" stroke-width="1.300"/><path d="M0 14l1.500-3.500 2 2z" fill="#3592C4"/></svg>
<svg style="left:1089px;top:97.5px;" width="9" height="6" viewBox="0 0 9 6"><path d="M1 1 4.500 4.500 8 1" fill="none" stroke="#AFB1B3" stroke-width="1.300"/></svg>
<div style="left:1104px;top:90px;width:1px;height:20px;background:#555759;"></div>
<div style="left:1107px;top:88px;width:52px;height:23px;background:#4E5254;border-radius:3px"></div>
<svg style="left:1112px;top:94px;" width="13" height="12" viewBox="0 0 13 12"><path d="M0 1h13M0 4.300h13M0 7.600h13M0 11h13" stroke="#AFB1B3" stroke-width="1.500"/></svg>
<svg style="left:1162px;top:94px;" width="13" height="12" viewBox="0 0 13 12"><path d="M0 1h5M0 4.300h5M0 7.600h5M0 11h5" stroke="#AFB1B3" stroke-width="1.500"/><rect x="6.500" y="0" width="6.500" height="12" fill="#AFB1B3"/></svg>
<svg style="left:1210px;top:94px;" width="13" height="12" viewBox="0 0 13 12"><rect width="13" height="12" rx="1" fill="#AFB1B3"/><path d="M1.500 10L5 5.5l2.200 2.700L9 6.5l3.500 3.500z" fill="#3C3F41"/></svg>
<div style="left:1192px;top:115px;width:74px;height:23px;background:#2B2B2B;"></div>
<svg style="left:1198px;top:121px;" width="12" height="11" viewBox="0 0 12 11"><path d="M6 0 12 11H0z" fill="#E2A53A"/><path d="M6 3.500v4" stroke="#2B2B2B" stroke-width="1.500"/><circle cx="6" cy="9.200" r=".9" fill="#2B2B2B"/></svg>
<svg style="left:1229px;top:123.5px;" width="10" height="7" viewBox="0 0 10 7"><path d="M1 6 5 1.500 9 6" fill="none" stroke="#AFB1B3" stroke-width="1.400"/></svg>
<svg style="left:1250px;top:123.5px;" width="10" height="7" viewBox="0 0 10 7"><path d="M1 1 5 5.500 9 1" fill="none" stroke="#AFB1B3" stroke-width="1.400"/></svg>
<svg style="left:1346.5px;top:65.5px;" width="12" height="12.428571428571429" viewBox="0 0 14 14.500"><rect x="1" y=".75" width="7.500" height="12" rx="1.200" fill="none" stroke="#AFB1B3" stroke-width="1.600"/><rect x="6.500" y="7.500" width="6.500" height="5" fill="#3B4754"/><rect x="7.800" y="8.800" width="4.500" height="3.200" fill="none" stroke="#AFB1B3" stroke-width="1.300"/><circle cx="11.300" cy="12" r="2.100" fill="#23D160" stroke="#3B4754" stroke-width=".5"/></svg>
<svg style="left:1483px;top:68px;" width="8" height="8" viewBox="0 0 8 8"><path d="M.5.500l7 7M7.500.500l-7 7" stroke="#7F8B96" stroke-width="1"/></svg>
<svg style="left:1854px;top:65px;" width="14" height="14" viewBox="0 0 16 16"><rect x="6.300" y="1.300" width="3.400" height="3.200" rx=".3" transform="rotate(0 8 8)" fill="#AFB1B3"/><rect x="6.300" y="1.300" width="3.400" height="3.200" rx=".3" transform="rotate(60 8 8)" fill="#AFB1B3"/><rect x="6.300" y="1.300" width="3.400" height="3.200" rx=".3" transform="rotate(120 8 8)" fill="#AFB1B3"/><rect x="6.300" y="1.300" width="3.400" height="3.200" rx=".3" transform="rotate(180 8 8)" fill="#AFB1B3"/><rect x="6.300" y="1.300" width="3.400" height="3.200" rx=".3" transform="rotate(240 8 8)" fill="#AFB1B3"/><rect x="6.300" y="1.300" width="3.400" height="3.200" rx=".3" transform="rotate(300 8 8)" fill="#AFB1B3"/><circle cx="8" cy="8" r="3.900" fill="none" stroke="#AFB1B3" stroke-width="2.700"/></svg>
<div style="left:1880px;top:71px;width:13px;height:2px;background:#AFB1B3;"></div>
<svg style="left:1275px;top:93.5px;" width="12" height="11.5" viewBox="0 0 13 14"><path d="M3.500 3A5.300 5.300 0 1 0 9.500 3" fill="none" stroke="#AFB1B3" stroke-width="1.800"/><path d="M6.500 0v6.500" stroke="#AFB1B3" stroke-width="1.800"/></svg>
<svg style="left:1296.5px;top:93.5px;" width="14" height="11.5" viewBox="0 0 15 14"><path d="M0 4.500h3L7 1v12L3 9.500H0z" fill="#AFB1B3"/><path d="M9 4.500a3 3 0 0 1 0 5M10.500 2a6 6 0 0 1 0 10" fill="none" stroke="#AFB1B3" stroke-width="1.600"/></svg>
<svg style="left:1320px;top:93.5px;" width="10.5" height="11.5" viewBox="0 0 11 14"><path d="M0 4.500h3L7 1v12L3 9.500H0z" fill="#AFB1B3"/><path d="M9 4.500a3 3 0 0 1 0 5" fill="none" stroke="#AFB1B3" stroke-width="1.600"/></svg>
<svg style="left:1341.5px;top:93px;" width="15" height="12" viewBox="0 0 17 14"><rect x=".9" y="1.800" width="7" height="11" rx="1" fill="none" stroke="#AFB1B3" stroke-width="1.700"/><path d="M11 2a7 7 0 0 1 1.500 10" fill="none" stroke="#3592C4" stroke-width="1.900"/><path d="M9.300 0 14.500 1.200 11 5z" fill="#3592C4"/></svg>
<svg style="left:1367px;top:93px;" width="15" height="12" viewBox="0 0 17 14"><rect x="9.100" y="1.800" width="7" height="11" rx="1" fill="none" stroke="#AFB1B3" stroke-width="1.700"/><path d="M6 2A7 7 0 0 0 4.500 12" fill="none" stroke="#3592C4" stroke-width="1.900"/><path d="M7.700 0 2.500 1.200 6 5z" fill="#3592C4"/></svg>
<svg style="left:1397px;top:94.5px;" width="8.2" height="9" viewBox="0 0 10 11"><path d="M0 5.500 10 0v11z" fill="#AFB1B3"/></svg>
<svg style="left:1422.5px;top:94.7px;" width="8.6" height="8.6" viewBox="0 0 10 10"><circle cx="5" cy="5" r="5" fill="#AFB1B3"/></svg>
<div style="left:1448.8px;top:94.7px;width:8.5px;height:8.5px;background:#AFB1B3;"></div>
<svg style="left:1472px;top:93px;" width="14" height="11.7" viewBox="0 0 16 14"><path d="M0 3h4L5.500 1h5L12 3h4v11H0z" fill="#AFB1B3"/><circle cx="8" cy="8.200" r="3" fill="none" stroke="#3C3F41" stroke-width="1.700"/></svg>
<svg style="left:1498px;top:92.3px;" width="14" height="13.2" viewBox="0 0 16 16"><path d="M3.300 4A6.200 6.200 0 1 1 1.800 9" fill="none" stroke="#AFB1B3" stroke-width="1.800"/><path d="M0 2 5.300 3.300 1.500 7.200z" fill="#AFB1B3"/><path d="M8 5v3.500h3" fill="none" stroke="#AFB1B3" stroke-width="1.500"/></svg>
<svg style="left:1529.4px;top:93px;" width="3.4" height="12.2" viewBox="0 0 4 15"><circle cx="2" cy="2" r="1.900" fill="#AFB1B3"/><circle cx="2" cy="7.500" r="1.900" fill="#AFB1B3"/><circle cx="2" cy="13" r="1.900" fill="#AFB1B3"/></svg>
<svg style="left:498px;top:118px;" width="14" height="12" viewBox="0 0 14 12"><rect width="14" height="12" rx="1" fill="#C9CCCE"/><path d="M1.500 10L5 5.5l2.200 2.700L9 6.5l3.500 3.500z" fill="#313335"/></svg>
<svg style="left:498px;top:139px;" width="14" height="12" viewBox="0 0 14 12"><rect width="14" height="12" rx="1" fill="#C9CCCE"/><path d="M1.500 10L5 5.5l2.200 2.700L9 6.5l3.500 3.500z" fill="#313335"/></svg>
<svg style="left:498px;top:160px;" width="14" height="12" viewBox="0 0 14 12"><rect width="14" height="12" rx="1" fill="#C9CCCE"/><path d="M1.500 10L5 5.5l2.200 2.700L9 6.5l3.500 3.500z" fill="#313335"/></svg>
<svg style="left:498px;top:222px;" width="15" height="15" viewBox="0 0 15 15"><path d="M5 0h6v6H2V3z" fill="#A9B1BA"/><path d="M5 0v3H2z" fill="#6D747A"/><rect x="0" y="7.500" width="15" height="7.500" fill="#D9602B"/><path d="M5.500 9 3.500 11.200 5.500 13.400M9.500 9l2 2.200-2 2.200" stroke="#7A2A0A" stroke-width="1.200" fill="none"/></svg>
<svg style="left:500px;top:243px;" width="14" height="13" viewBox="0 0 14 13"><circle cx="4.500" cy="6.500" r="3.500" fill="none" stroke="#3E9CC0" stroke-width="2.200"/><circle cx="4.500" cy="6.500" r="1" fill="#3E9CC0"/><path d="M11 13V2" stroke="#E8684F" stroke-width="1.500"/><path d="M8.500 4 11 .800 13.500 4" fill="none" stroke="#E8684F" stroke-width="1.200"/></svg>
<svg style="left:595px;top:552px;" width="12" height="15" viewBox="0 0 12 15"><path d="M6 0a5.500 5.500 0 0 1 3.200 10v1H2.800v-1A5.500 5.500 0 0 1 6 0z" fill="#F2A83B"/><path d="M3.300 12.500h5.400M3.800 14.500h4.400" stroke="#C9CCCE" stroke-width="1.100"/></svg>
<div style="left:0;top:114px;width:1268px;height:876px;overflow:hidden"><div style="left:0;top:-114px">
<svg style="left:524px;top:225px;" width="9" height="11" viewBox="0 0 9 11"><path d="M.5.500h8v6L4.500 10.300.5 6.500z" fill="#313335" stroke="#606366" stroke-width="1"/><path d="M2.500 4h4" stroke="#606366" stroke-width="1"/></svg>
<svg style="left:524px;top:246px;" width="9" height="11" viewBox="0 0 9 11"><path d="M.5.500h8v6L4.500 10.300.5 6.500z" fill="#313335" stroke="#606366" stroke-width="1"/><path d="M2.500 4h4" stroke="#606366" stroke-width="1"/></svg>
<svg style="left:524px;top:288px;" width="9" height="11" viewBox="0 0 9 11"><path d="M.5.500h8v6L4.500 10.300.5 6.500z" fill="#313335" stroke="#606366" stroke-width="1"/><path d="M2.500 4h4" stroke="#606366" stroke-width="1"/></svg>
<svg style="left:524px;top:393px;" width="9" height="11" viewBox="0 0 9 11"><path d="M.5.500h8v6L4.500 10.300.5 6.500z" fill="#313335" stroke="#606366" stroke-width="1"/><path d="M2.500 4h4" stroke="#606366" stroke-width="1"/></svg>
<svg style="left:524px;top:456px;" width="9" height="11" viewBox="0 0 9 11"><path d="M.5.500h8v6L4.500 10.300.5 6.500z" fill="#313335" stroke="#606366" stroke-width="1"/><path d="M2.500 4h4" stroke="#606366" stroke-width="1"/></svg>
<svg style="left:524px;top:477px;" width="9" height="11" viewBox="0 0 9 11"><path d="M.5.500h8v6L4.500 10.300.5 6.500z" fill="#313335" stroke="#606366" stroke-width="1"/><path d="M2.500 4h4" stroke="#606366" stroke-width="1"/></svg>
<svg style="left:524px;top:750px;" width="9" height="11" viewBox="0 0 9 11"><path d="M.5.500h8v6L4.500 10.300.5 6.500z" fill="#313335" stroke="#606366" stroke-width="1"/><path d="M2.500 4h4" stroke="#606366" stroke-width="1"/></svg>
<svg style="left:524px;top:855px;" width="9" height="11" viewBox="0 0 9 11"><path d="M.5.500h8v6L4.500 10.300.5 6.500z" fill="#313335" stroke="#606366" stroke-width="1"/><path d="M2.500 4h4" stroke="#606366" stroke-width="1"/></svg>
<svg style="left:524px;top:876px;" width="9" height="11" viewBox="0 0 9 11"><path d="M.5.500h8v6L4.500 10.300.5 6.500z" fill="#313335" stroke="#606366" stroke-width="1"/><path d="M2.500 4h4" stroke="#606366" stroke-width="1"/></svg>
<svg style="left:524px;top:939px;" width="9" height="11" viewBox="0 0 9 11"><path d="M.5.500h8v6L4.500 10.300.5 6.500z" fill="#313335" stroke="#606366" stroke-width="1"/><path d="M2.500 4h4" stroke="#606366" stroke-width="1"/></svg>
<svg style="left:524px;top:181px;" width="9" height="11" viewBox="0 0 9 11"><path d="M.5 10.500h8v-6L4.500.700.5 4.500z" fill="#313335" stroke="#606366" stroke-width="1"/><path d="M2.500 7h4" stroke="#606366" stroke-width="1"/></svg>
<svg style="left:524px;top:517px;" width="9" height="11" viewBox="0 0 9 11"><path d="M.5 10.500h8v-6L4.500.700.5 4.500z" fill="#313335" stroke="#606366" stroke-width="1"/><path d="M2.500 7h4" stroke="#606366" stroke-width="1"/></svg>
<svg style="left:524px;top:538px;" width="9" height="11" viewBox="0 0 9 11"><path d="M.5 10.500h8v-6L4.500.700.5 4.500z" fill="#313335" stroke="#606366" stroke-width="1"/><path d="M2.500 7h4" stroke="#606366" stroke-width="1"/></svg>
<svg style="left:524px;top:601px;" width="9" height="11" viewBox="0 0 9 11"><path d="M.5 10.500h8v-6L4.500.700.5 4.500z" fill="#313335" stroke="#606366" stroke-width="1"/><path d="M2.500 7h4" stroke="#606366" stroke-width="1"/></svg>
<svg style="left:524px;top:622px;" width="9" height="11" viewBox="0 0 9 11"><path d="M.5 10.500h8v-6L4.500.700.5 4.500z" fill="#313335" stroke="#606366" stroke-width="1"/><path d="M2.500 7h4" stroke="#606366" stroke-width="1"/></svg>
<svg style="left:524px;top:643px;" width="9" height="11" viewBox="0 0 9 11"><path d="M.5 10.500h8v-6L4.500.700.5 4.500z" fill="#313335" stroke="#606366" stroke-width="1"/><path d="M2.500 7h4" stroke="#606366" stroke-width="1"/></svg>
<svg style="left:524px;top:664px;" width="9" height="11" viewBox="0 0 9 11"><path d="M.5 10.500h8v-6L4.500.700.5 4.500z" fill="#313335" stroke="#606366" stroke-width="1"/><path d="M2.500 7h4" stroke="#606366" stroke-width="1"/></svg>
</div></div>
<svg style="left:7px;top:105.8px;" width="11.5" height="9.2" viewBox="0 0 11.5 9.2"><path d="M0 0h4.500l1.500 2H11.500V9.200H0z" fill="#D6D6D6"/></svg>
<svg style="left:7px;top:237px;" width="12" height="12" viewBox="0 0 12 12"><path d="M6 0l3.500 5.500h-7z" fill="#AFB1B3"/><rect x="0" y="7" width="5" height="5" fill="#AFB1B3"/><circle cx="9.500" cy="9.500" r="2.500" fill="#AFB1B3"/></svg>
<svg style="left:7px;top:777px;" width="11" height="9" viewBox="0 0 11 9"><rect x="6" y="0" width="5" height="4" fill="#AFB1B3"/><rect x="0" y="5" width="5" height="4" fill="#AFB1B3"/><rect x="6" y="5" width="5" height="4" fill="#AFB1B3"/></svg>
<svg style="left:6px;top:858px;" width="13" height="12" viewBox="0 0 13 12"><path d="M6.500 0 8.300 4.300 13 4.600 9.400 7.600 10.500 12 6.500 9.600 2.500 12 3.600 7.600 0 4.600 4.700 4.300z" fill="#AFB1B3"/></svg>
<svg style="left:7px;top:965px;" width="12" height="10" viewBox="0 0 12 10"><path d="M0 10a6 6.500 0 0 1 12 0z" fill="#AFB1B3"/><path d="M3 3.500 1.500 .800M9 3.500 10.500.800" stroke="#AFB1B3" stroke-width="1"/></svg>
<svg style="left:1903px;top:67px;" width="14" height="10.9375" viewBox="0 0 16 12.500"><path d="M1.200 12C.4 8 2.500 4.300 6.500 3c2.200-.7 4.600-.2 5.600 1.300.9 1.400.6 3.400-1 4.500L10.800 12H8.900l-.3-1.600H7.300L7 12H5l-.3-1.600H3.400L3.100 12z" fill="#AFB1B3"/><path d="M10.600 7.300c2.300-.1 3.900-1.700 3.900-3.600 0-1.900-2-2.600-2.900-1.300" fill="none" stroke="#AFB1B3" stroke-width="1.500" stroke-linecap="round"/></svg>
<svg style="left:1903px;top:141px;" width="13" height="12" viewBox="0 0 13 12"><rect x=".7" y=".7" width="8" height="10.500" rx="1" fill="none" stroke="#AFB1B3" stroke-width="1.400"/><rect x="5" y="2" width="8" height="6" fill="#3C3F41"/><rect x="6" y="3" width="6.300" height="4.500" fill="none" stroke="#AFB1B3" stroke-width="1.300"/></svg>
<svg style="left:1904px;top:261px;" width="11" height="9" viewBox="0 0 11 9"><path d="M0 1h3M4 1h3M8 1h3M0 4.500h3M4 4.500h3M8 4.500h3M0 8h3M4 8h3M8 8h3" stroke="#AFB1B3" stroke-width="1.800"/></svg>
<svg style="left:1904px;top:782px;" width="10" height="13" viewBox="0 0 10 13"><rect x=".8" y=".8" width="8.400" height="11.400" rx="1.200" fill="none" stroke="#AFB1B3" stroke-width="1.500"/><path d="M3 10.500h4" stroke="#AFB1B3" stroke-width="1"/></svg>
<svg style="left:1903px;top:917px;" width="14" height="14" viewBox="0 0 14 14"><rect x=".8" y="1.500" width="8" height="11" rx="1.200" fill="none" stroke="#D6D6D6" stroke-width="1.500"/><rect x="5.500" y="5.500" width="8.500" height="8.500" fill="#2D2F30"/><rect x="7" y="7.500" width="5" height="4" fill="none" stroke="#D6D6D6" stroke-width="1.200"/><circle cx="12" cy="4.500" r="1.800" fill="#3DDC84"/></svg>
<div style="left:1856px;top:861px;width:27px;height:106px;background:#313335;border:1px solid #45484A;border-radius:4px;box-sizing:border-box"></div>
<svg style="left:1863px;top:869px;" width="12" height="12" viewBox="0 0 12 12"><path d="M6 0v12M0 6h12" stroke="#AFB1B3" stroke-width="1.800"/></svg>
<div style="left:1863px;top:900px;width:12px;height:2px;background:#5E6163;"></div>
<svg style="left:1862px;top:946px;" width="15" height="14" viewBox="0 0 15 14"><rect x=".5" y=".5" width="14" height="13" fill="#45484A" stroke="#5A5D5F"/><path d="M3.500 6.500v-3h3M11.500 7.500v3h-3" fill="none" stroke="#313335" stroke-width="1.200"/></svg>
<svg style="left:34px;top:997px;" width="11" height="10" viewBox="0 0 11 10"><path d="M0 1h2M3.500 1h7.500M0 5h2M3.500 5h7.500M0 9h2M3.500 9h7.500" stroke="#AFB1B3" stroke-width="1.800"/></svg>
<svg style="left:100px;top:996px;" width="11" height="11" viewBox="0 0 11 11"><circle cx="5.500" cy="5.500" r="5.500" fill="#AFB1B3"/><path d="M5.500 2.300v4" stroke="#3C3F41" stroke-width="1.600"/><circle cx="5.500" cy="8.300" r=".9" fill="#3C3F41"/></svg>
<svg style="left:183px;top:996px;" width="11" height="11" viewBox="0 0 11 11"><rect width="11" height="11" fill="#AFB1B3"/><path d="M2 2.500 5 5.200 2 8M5.500 8.500h3.500" stroke="#3C3F41" stroke-width="1.200" fill="none"/></svg>
<svg style="left:263px;top:997px;" width="11" height="9" viewBox="0 0 11 9"><path d="M0 1h11M0 4.500h7M0 8h9" stroke="#AFB1B3" stroke-width="1.800"/></svg>
<svg style="left:330px;top:995px;" width="13" height="13" viewBox="0 0 13 13"><path d="M1.500 6.500 6.500 1.500" stroke="#AFB1B3" stroke-width="3.400"/><path d="M4.500 4.500 12 11.800" stroke="#AFB1B3" stroke-width="2.400"/></svg>
<svg style="left:393px;top:996px;" width="13" height="10.15625" viewBox="0 0 16 12.500"><path d="M1.200 12C.4 8 2.500 4.300 6.500 3c2.200-.7 4.600-.2 5.600 1.300.9 1.400.6 3.400-1 4.500L10.800 12H8.900l-.3-1.600H7.300L7 12H5l-.3-1.600H3.400L3.100 12z" fill="#AFB1B3"/><path d="M10.600 7.300c2.300-.1 3.900-1.700 3.900-3.600 0-1.900-2-2.600-2.900-1.300" fill="none" stroke="#AFB1B3" stroke-width="1.500" stroke-linecap="round"/></svg>
<svg style="left:522px;top:996px;" width="14" height="11" viewBox="0 0 14 11"><path d="M1.500 10A5.800 5.800 0 0 1 9.500 3.800" fill="none" stroke="#AFB1B3" stroke-width="2.200"/><path d="M11.300 5A5.800 5.800 0 0 1 12.800 10" fill="none" stroke="#AFB1B3" stroke-width="2.200"/><path d="M5.500 10 10.500 4 8.500 10z" fill="#AFB1B3"/></svg>
<svg style="left:595px;top:995px;" width="13" height="14" viewBox="0 0 13 14"><path d="M0 0 9.500 6 0 12z" fill="#AFB1B3"/><circle cx="10" cy="11" r="2.300" fill="#3DDC84" stroke="#3C3F41" stroke-width=".6"/></svg>
<svg style="left:651px;top:995px;" width="12" height="14" viewBox="0 0 12 14"><rect x="2.500" y="1" width="7" height="11" rx="2.500" fill="#AFB1B3"/><path d="M0 4h12M0 8.500h12M3 12v2M9 12v2M4 0 5 1.500M8 0 7 1.500" stroke="#AFB1B3" stroke-width="1.300"/></svg>
<svg style="left:1705px;top:995.5px;" width="13" height="13" viewBox="0 0 13 13"><circle cx="6.500" cy="6.500" r="6.500" fill="#499C54"/></svg>
<svg style="left:1792px;top:995px;" width="14" height="12" viewBox="0 0 14 12"><path d="M2.500 7.500H.600V.600h9v1.500" fill="none" stroke="#AFB1B3" stroke-width="1.200"/><path d="M3 3h9.500v3M3 3v6.500h3.500" fill="none" stroke="#AFB1B3" stroke-width="1.200"/><circle cx="9" cy="7.500" r="2.200" fill="none" stroke="#AFB1B3" stroke-width="1.200"/><path d="M10.500 9 13 11.500" stroke="#AFB1B3" stroke-width="1.400"/></svg>
<svg style="left:7px;top:1016px;" width="13" height="13" viewBox="0 0 13 13"><rect x=".6" y="2.600" width="9.500" height="9.500" fill="none" stroke="#AFB1B3" stroke-width="1.200"/><path d="M3 2.500V.600h9.400V10H10.500" fill="none" stroke="#AFB1B3" stroke-width="1.200"/></svg>
<svg style="left:1825px;top:1015px;" width="14" height="14" viewBox="0 0 14 14"><path d="M0 1h4l2.500 8L11 1h3L8 14H4.500z" fill="#3DDC84"/><path d="M8 14 14 1h-3L6.500 9z" fill="#35A3DC"/></svg>
<svg style="left:1848px;top:1015px;" width="13" height="13" viewBox="0 0 13 13"><rect x="4" y="6" width="8.500" height="7" fill="#AFB1B3"/><path d="M1 7V4a2.500 2.500 0 0 1 5 0v2" fill="none" stroke="#AFB1B3" stroke-width="1.500"/></svg>
<svg style="left:1872px;top:1014px;" width="16" height="16" viewBox="0 0 16 16"><circle cx="8" cy="8" r="7.600" fill="#AFB1B3"/><circle cx="5.300" cy="6" r="1.200" fill="#3C3F41"/><circle cx="10.700" cy="6" r="1.200" fill="#3C3F41"/><path d="M4 9.500a4.200 4.200 0 0 0 8 0z" fill="#3C3F41"/></svg>
<svg style="left:1896px;top:1014px;" width="16" height="16" viewBox="0 0 16 16"><circle cx="8" cy="8" r="7.600" fill="#AFB1B3"/><circle cx="5.300" cy="6" r="1.200" fill="#3C3F41"/><circle cx="10.700" cy="6" r="1.200" fill="#3C3F41"/><path d="M4.500 12a3.700 3.500 0 0 1 7 0" fill="none" stroke="#3C3F41" stroke-width="1.400"/></svg>
<span id="t1" style="left:36px;top:7px;line-height:16px;font-size:11.16px;"><u>F</u>ile</span>
<span id="t2" style="left:67px;top:7px;line-height:16px;font-size:11.59px;"><u>E</u>dit</span>
<span id="t3" style="left:100px;top:7px;line-height:16px;font-size:11.16px;"><u>V</u>iew</span>
<span id="t4" style="left:137px;top:7px;line-height:16px;letter-spacing:-0.047px;"><u>N</u>avigate</span>
<span id="t5" style="left:196px;top:7px;line-height:16px;font-size:11.29px;"><u>C</u>ode</span>
<span id="t6" style="left:235px;top:7px;line-height:16px;font-size:11.52px;">Analy<u>z</u>e</span>
<span id="t7" style="left:288px;top:7px;line-height:16px;font-size:11.64px;"><u>R</u>efactor</span>
<span id="t8" style="left:345px;top:7px;line-height:16px;letter-spacing:0.059px;"><u>B</u>uild</span>
<span id="t9" style="left:384px;top:7px;line-height:16px;font-size:11.16px;letter-spacing:-0.168px;">R<u>u</u>n</span>
<span id="t10" style="left:417px;top:7px;line-height:16px;"><u>T</u>ools</span>
<span id="t11" style="left:458px;top:7px;line-height:16px;font-size:11.16px;letter-spacing:-0.986px;">VC<u>S</u></span>
<span id="t12" style="left:491px;top:7px;line-height:16px;letter-spacing:0.052px;"><u>W</u>indow</span>
<span id="t13" style="left:548px;top:7px;line-height:16px;letter-spacing:0.078px;"><u>H</u>elp</span>
<span id="t14" style="left:598px;top:7px;line-height:16px;font-size:11.87px;color:#8A8A8A;">ListSample - MainActivity.kt [ListSample.app]</span>
<span id="t15" style="left:13px;top:36px;line-height:16px;font-size:11.72px;-webkit-text-stroke:.45px #BBBBBB;">ListSample</span>
<span id="t16" style="left:87px;top:36px;line-height:16px;letter-spacing:-0.010px;-webkit-text-stroke:.45px #BBBBBB;">app</span>
<span id="t17" style="left:123px;top:36px;line-height:16px;font-size:11.16px;letter-spacing:-0.293px;">src</span>
<span id="t18" style="left:154px;top:36px;line-height:16px;font-size:11.53px;">main</span>
<span id="t19" style="left:196px;top:36px;line-height:16px;font-size:11.45px;">java</span>
<span id="t20" style="left:233px;top:36px;line-height:16px;letter-spacing:0.104px;">net</span>
<span id="t21" style="left:266px;top:36px;line-height:16px;font-size:11.7px;">engawapg</span>
<span id="t22" style="left:337px;top:36px;line-height:16px;letter-spacing:-0.010px;">app</span>
<span id="t23" style="left:373px;top:36px;line-height:16px;font-size:11.69px;">listsample</span>
<span id="t24" style="left:457px;top:36px;line-height:16px;letter-spacing:0.280px;">MainActivity.kt</span>
<span id="t25" style="left:569px;top:36px;line-height:16px;letter-spacing:0.249px;">MainActivity</span>
<span id="t26" style="left:668px;top:36px;line-height:16px;font-size:11.36px;">onCreate(savedInstanceState: Bundle?)</span>
<span id="t27" style="left:1312px;top:36px;line-height:16px;letter-spacing:-0.010px;">app</span>
<span id="t28" style="left:1393px;top:36px;line-height:16px;font-size:11.16px;letter-spacing:-0.044px;">Pixel 5 API 31 (S - 12.0)</span>
<span id="t29" style="left:51px;top:64px;line-height:16px;letter-spacing:0.089px;">Android</span>
<span id="t30" style="left:66px;top:88px;line-height:16px;letter-spacing:-0.010px;">app</span>
<span id="t31" style="left:66px;top:108px;line-height:16px;font-size:11.36px;">Gradle Scripts</span>
<span id="t32" style="left:84.5px;top:128px;line-height:16px;letter-spacing:0.079px;">build.gradle</span>
<span id="t33" style="left:147.2px;top:128px;line-height:16px;font-size:11.49px;color:#787878;"> (Project: ListSample)</span>
<span id="t34" style="left:84.5px;top:148px;line-height:16px;letter-spacing:0.079px;">build.gradle</span>
<span id="t35" style="left:147.2px;top:148px;line-height:16px;font-size:11.68px;color:#787878;"> (Module: ListSample.app)</span>
<span id="t36" style="left:84.5px;top:168px;line-height:16px;letter-spacing:-0.010px;">gradle-wrapper.properties</span>
<span id="t37" style="left:220.7px;top:168px;line-height:16px;font-size:11.55px;color:#787878;"> (Gradle Version)</span>
<span id="t38" style="left:84.5px;top:188px;line-height:16px;letter-spacing:0.043px;">proguard-rules.pro</span>
<span id="t39" style="left:183.7px;top:188px;line-height:16px;font-size:11.46px;color:#787878;"> (ProGuard Rules for ListSample.app)</span>
<span id="t40" style="left:84.5px;top:208px;line-height:16px;font-size:11.79px;">gradle.properties</span>
<span id="t41" style="left:173.2px;top:208px;line-height:16px;font-size:11.62px;color:#787878;"> (Project Properties)</span>
<span id="t42" style="left:84.5px;top:228px;line-height:16px;font-size:11.84px;">settings.gradle</span>
<span id="t43" style="left:161.2px;top:228px;line-height:16px;font-size:11.55px;color:#787878;"> (Project Settings)</span>
<span id="t44" style="left:84.5px;top:248px;line-height:16px;font-size:11.87px;">local.properties</span>
<span id="t45" style="left:165.2px;top:248px;line-height:16px;font-size:11.38px;color:#787878;"> (SDK Location)</span>
<span id="t46" style="left:493px;top:64px;line-height:16px;letter-spacing:0.280px;">MainActivity.kt</span>
<span id="t47" style="left:623px;top:64px;line-height:16px;font-size:11.62px;">settings.gradle (ListSample)</span>
<span id="t48" style="left:817px;top:64px;line-height:16px;font-size:11.66px;">build.gradle (ListSample)</span>
<span id="t49" style="left:997px;top:64px;line-height:16px;letter-spacing:-0.005px;">grape.png</span>
<span id="t50" style="left:1101px;top:64px;line-height:16px;letter-spacing:-0.007px;">peach.png</span>
<span id="t51" style="left:1207px;top:64px;line-height:16px;font-size:11.87px;-webkit-mask-image:linear-gradient(90deg,#000 55%,transparent 100%);mask-image:linear-gradient(90deg,#000 55%,transparent 100%);">strawl</span>
<span id="t52" style="left:966px;top:92px;line-height:16px;font-size:11.6px;">Live Edit of literals: ON</span>
<span id="t53" style="left:1128px;top:92px;line-height:16px;font-size:11.29px;">Code</span>
<span id="t54" style="left:1179px;top:92px;line-height:16px;font-size:11.82px;">Split</span>
<span id="t55" style="left:1226px;top:92px;line-height:16px;font-size:11.56px;">Design</span>
<span id="t56" style="left:1213px;top:119px;line-height:16px;font-size:11.16px;letter-spacing:-0.219px;">5</span>
<span id="t57" style="left:1274px;top:64px;line-height:16px;font-size:11.68px;">Emulator:</span>
<span id="t58" style="left:1363px;top:64px;line-height:16px;font-size:11.19px;">Pixel 5 API 31 S - 12.0</span>
<span id="t59" style="left:49px;top:994px;line-height:16px;font-size:11.16px;letter-spacing:-0.510px;">TODO</span>
<span id="t60" style="left:116px;top:994px;line-height:16px;font-size:11.16px;letter-spacing:-0.392px;">Problems</span>
<span id="t61" style="left:199px;top:994px;line-height:16px;font-size:11.16px;letter-spacing:-0.023px;">Terminal</span>
<span id="t62" style="left:279px;top:994px;line-height:16px;font-size:11.16px;letter-spacing:-0.418px;">Logcat</span>
<span id="t63" style="left:347px;top:994px;line-height:16px;font-size:11.16px;letter-spacing:-0.164px;">Build</span>
<span id="t64" style="left:410px;top:994px;line-height:16px;font-size:11.16px;letter-spacing:-0.063px;">Upgrade Assistant</span>
<span id="t65" style="left:539px;top:994px;line-height:16px;font-size:11.16px;letter-spacing:-0.044px;">Profiler</span>
<span id="t66" style="left:610px;top:994px;line-height:16px;font-size:11.16px;letter-spacing:-0.492px;">Run</span>
<span id="t67" style="left:667px;top:994px;line-height:16px;font-size:11.16px;letter-spacing:-0.131px;">App Inspection</span>
<span id="t68" style="left:1722px;top:994px;line-height:16px;font-size:11.16px;letter-spacing:-0.363px;">Event Log</span>
<span id="t69" style="left:1809px;top:994px;line-height:16px;font-size:11.16px;letter-spacing:-0.158px;">Layout Inspector</span>
<span id="t70" class="b" style="left:1708.5px;top:994px;line-height:16px;font-size:9.3px;color:#FFFFFF;letter-spacing:-0.173px;">1</span>
<span id="t71" style="left:28px;top:1014px;line-height:16px;font-size:11.75px;">Launch succeeded (moments ago)</span>
<span id="t72" style="left:1664px;top:1014px;line-height:16px;font-size:11.16px;letter-spacing:-0.186px;">54:63</span>
<span id="t73" style="left:1703px;top:1014px;line-height:16px;font-size:11.16px;letter-spacing:-0.517px;">LF</span>
<span id="t74" style="left:1727px;top:1014px;line-height:16px;font-size:11.16px;letter-spacing:-0.124px;">UTF-8</span>
<span id="t75" style="left:1770px;top:1014px;line-height:16px;font-size:11.16px;letter-spacing:-0.084px;">4 spaces</span>
<span id="t76" style="left:13px;top:83px;line-height:16px;transform:translate(-50%,-50%) rotate(-90deg);font-size:11.16px;color:#DDDDDD;letter-spacing:-0.106px;">Project</span>
<span id="t77" style="left:13px;top:185.5px;line-height:16px;transform:translate(-50%,-50%) rotate(-90deg);font-size:11.16px;letter-spacing:-0.120px;">Resource Manager</span>
<span id="t78" style="left:13px;top:748.5px;line-height:16px;transform:translate(-50%,-50%) rotate(-90deg);font-size:11.16px;letter-spacing:-0.031px;">Structure</span>
<span id="t79" style="left:13px;top:831px;line-height:16px;transform:translate(-50%,-50%) rotate(-90deg);font-size:11.16px;letter-spacing:-0.212px;">Favorites</span>
<span id="t80" style="left:13px;top:926px;line-height:16px;transform:translate(-50%,-50%) rotate(-90deg);font-size:11.16px;">Build Variants</span>
<span id="t81" style="left:1910px;top:101px;line-height:16px;transform:translate(-50%,-50%) rotate(90deg);font-size:11.32px;">Gradle</span>
<span id="t82" style="left:1910px;top:197.5px;line-height:16px;transform:translate(-50%,-50%) rotate(90deg);font-size:11.16px;letter-spacing:-0.018px;">Device Manager</span>
<span id="t83" style="left:1910px;top:299px;line-height:16px;transform:translate(-50%,-50%) rotate(90deg);font-size:11.16px;letter-spacing:-0.142px;">Assistant</span>
<span id="t84" style="left:1910px;top:847.25px;line-height:16px;transform:translate(-50%,-50%) rotate(90deg);font-size:11.16px;letter-spacing:-0.218px;">Device File Explorer</span>
<span id="t85" style="left:1910px;top:957px;line-height:16px;transform:translate(-50%,-50%) rotate(90deg);font-size:11.16px;color:#DDDDDD;letter-spacing:-0.209px;">Emulator</span>
<span id="t86" class="b" style="left:1862px;top:919px;line-height:16px;font-size:10.23px;letter-spacing:-0.264px;">1:1</span>
<div style="left:1785px;top:326px;width:5px;height:55px;background:#3A1C16;border-radius:2.5px"></div>
<div style="left:1786px;top:326px;width:3.5px;height:55px;background:linear-gradient(90deg,#E07F68,#EE9A86 55%,#C8705C);border-radius:2px"></div>
<div style="left:1785.5px;top:437px;width:3px;height:107px;background:#232426;border-radius:1.5px"></div>
<div style="left:1384px;top:116.5px;width:401px;height:871.0px;background:#232425;border-radius:58px"></div>
<div style="left:1380.7px;top:115.6px;width:401.3px;height:872.4px;background:linear-gradient(90deg,#8E9292 0%,#8E9292 1%,rgba(142,146,146,0) 14%,rgba(22,22,22,0) 86%,#1a1a1a 99%),linear-gradient(180deg,#A0A1A3 0%,#6a6b6d 50%,#4e4e50 100%);border-radius:58px"></div>
<div style="left:1383.8px;top:118.8px;width:396.5px;height:867.2px;background:#020202;border-radius:55px"></div>
<div style="left:1385px;top:120px;width:395.3px;height:865.2px;background:linear-gradient(90deg,#727272 0%,#727272 1%,rgba(112,112,112,0) 14%,rgba(138,138,138,0) 86%,#858585 99%),linear-gradient(180deg,#555557,#666668);border-radius:54px"></div>
<div style="left:1388px;top:123px;width:390.75px;height:860.7px;background:#030303;border-radius:51px"></div>
<div style="left:1388px;top:123px;width:390.75px;height:859.2px;background:linear-gradient(0deg,#8a8a8c 0,#8a8a8c 2px,#2a2a2a 3px,#060607 4px);border-radius:51px"></div>
<div style="left:1388px;top:123px;width:390.75px;height:856.7px;background:#060607;border-radius:50px"></div>
<div style="left:1480px;top:135.5px;width:21px;height:21px;background:radial-gradient(circle,#050505 0 2px,#17181a 3px,#101113 7px,#0c0c0d 10px);border-radius:50%"></div>
<div style="left:1490px;top:144.8px;width:1.5px;height:1.5px;background:#4a4a4a;border-radius:50%"></div>
<div style="left:1513px;top:137px;width:6px;height:18px;background:#0d0d0e;border-radius:2px"></div>
<div style="left:1563px;top:144px;width:40px;height:6px;background:repeating-linear-gradient(115deg,#323232 0 2px,#161616 2px 4px);border-radius:2px;opacity:.9"></div>
<div style="left:1394px;top:164.500px;width:378px;height:752.500px;border-radius:30px 30px 0 0;overflow:hidden;background:#F1F1F3"><div style="left:0;top:0;width:378px;height:84px;background:#1B1C1E"></div><div style="left:0;top:83.500px;width:378px;height:270px;background:#CCCCCC"></div></div>
<span id="t87" style="left:1421.5px;top:172.5px;line-height:16px;font-size:12.07px;color:#F2F2F2;">3:01</span>
<svg style="left:1459px;top:174px;" width="11" height="12" viewBox="0 0 11 12"><path d="M3.500 0H9.500a1.500 1.500 0 0 1 1.500 1.500V10.500a1.500 1.500 0 0 1-1.500 1.500H1.500A1.500 1.500 0 0 1 0 10.500V3.500z" fill="#F2F2F2"/><path d="M4.500 1v3M6.500 1v3M8.500 1v3" stroke="#1B1C1E" stroke-width=".9"/></svg>
<svg style="left:1703px;top:174px;" width="15" height="12" viewBox="0 0 15 12"><path d="M7.500 12 0 3.200a10.500 10.500 0 0 1 15 0z" fill="#F2F2F2"/></svg>
<svg style="left:1719px;top:174px;" width="12" height="12" viewBox="0 0 12 12"><path d="M12 0v12H0z" fill="#F2F2F2"/></svg>
<svg style="left:1737.5px;top:174px;" width="8" height="12" viewBox="0 0 8 12"><path d="M2.500 0h3v1.500H8V12H0V1.500h2.500z" fill="#F2F2F2"/></svg>
<span id="t88" style="left:1410px;top:210.5px;line-height:24px;font-size:19.3px;color:#F2F2F2;-webkit-text-stroke:.35px #F2F2F2;">ListSample</span>
<div style="left:1399px;top:253px;width:368px;height:48px;background:#FFFFFF;border-radius:5px"></div>
<span id="t89" style="left:1467.5px;top:269px;line-height:20px;font-size:16px;color:#111111;letter-spacing:0.434px;-webkit-text-stroke:.25px #111;">0: Apple</span>
<div style="left:1399px;top:306px;width:368px;height:48px;background:#FFFFFF;border-radius:5px"></div>
<span id="t90" style="left:1467.5px;top:322px;line-height:20px;font-size:16px;color:#111111;letter-spacing:0.160px;-webkit-text-stroke:.25px #111;">1: Orange</span>
<div style="left:1399px;top:359px;width:368px;height:48px;background:#FFFFFF;border-radius:5px"></div>
<span id="t91" style="left:1467.5px;top:375px;line-height:20px;font-size:16px;color:#111111;letter-spacing:0.067px;-webkit-text-stroke:.25px #111;">2: Grape</span>
<div style="left:1399px;top:412px;width:368px;height:48px;background:#FFFFFF;border-radius:5px"></div>
<span id="t92" style="left:1467.5px;top:428px;line-height:20px;font-size:16px;color:#111111;letter-spacing:0.230px;-webkit-text-stroke:.25px #111;">3: Peach</span>
<div style="left:1399px;top:465px;width:368px;height:48px;background:#FFFFFF;border-radius:5px"></div>
<span id="t93" style="left:1467.5px;top:481px;line-height:20px;font-size:16px;color:#111111;letter-spacing:0.343px;-webkit-text-stroke:.25px #111;">4: Strawberry</span>
<svg style="left:1410px;top:254px;" width="46" height="46" viewBox="0 0 46 46"><path d="M1.500 12.500C6 9.500 13 9.500 17.500 13 20 15 26 15 28.500 13 33 9.500 40 9.500 44.500 12.500 45 26 35 35 23 35S1 26 1.500 12.500z" fill="#FFE36A"/><path d="M1.500 12.500C1 26 11 35 23 35S45 26 44.500 12.500" fill="none" stroke="#C9151E" stroke-width="1.300"/></svg>
<svg style="left:1410px;top:307px;" width="46" height="46" viewBox="0 0 46 46"><circle cx="23" cy="24.500" r="20.800" fill="#F7900A"/><path d="M22.500 7.500C23 3.500 27.500 .500 33 1 33.500 5 29 8.500 22.500 7.500z" fill="#1E7A3A"/><circle cx="13" cy="11" r="1.100" fill="#E0700A"/><circle cx="34" cy="13" r="1.100" fill="#E0700A"/><circle cx="22.5" cy="22" r="1.100" fill="#E0700A"/><circle cx="9" cy="25" r="1.100" fill="#E0700A"/><circle cx="34" cy="31" r="1.100" fill="#E0700A"/><circle cx="19" cy="36" r="1.100" fill="#E0700A"/></svg>
<svg style="left:1410px;top:360px;" width="46" height="46" viewBox="0 0 46 46"><ellipse cx="23" cy="24" rx="16.300" ry="20" fill="#5E4B97" transform="rotate(4 23 24)"/><ellipse cx="17" cy="12.500" rx="2.600" ry="3.800" fill="#B7A6D6" transform="rotate(12 17 12.500)"/></svg>
<svg style="left:1410px;top:413px;" width="46" height="46" viewBox="0 0 46 46"><path d="M22 3.500C34 2.500 43.500 11 43.500 23S35 42.500 27 41.500c-2 .200-3.500 1-5 .8C11 42 1.500 35 1.500 23S10 4 22 3.500z" fill="#F0707A"/><path d="M27 17.500c4.500 7 4.500 17 0 24" fill="none" stroke="#D8546A" stroke-width="1.400"/></svg>
<svg style="left:1410px;top:466px;" width="46" height="46" viewBox="0 0 46 46"><path d="M23 45.500C14 42 5.500 28 6 17.500 6.300 11 13 7.500 23 7.500s16.700 3.500 17 10C40.500 28 32 42 23 45.500z" fill="#E32B2B"/><path d="M12.500 8.500 13.500 2.500 18 5.500 23 .500 28 5.500 32.500 2.500 33.500 8.500 23 10z" fill="#4FA83D"/><ellipse cx="12" cy="16" rx="1.300" ry="2" fill="#FFA040"/><ellipse cx="23" cy="15" rx="1.300" ry="2" fill="#FFA040"/><ellipse cx="34" cy="15.5" rx="1.300" ry="2" fill="#FFA040"/><ellipse cx="17.5" cy="27" rx="1.300" ry="2" fill="#FFA040"/><ellipse cx="29" cy="26.5" rx="1.300" ry="2" fill="#FFA040"/><ellipse cx="23.5" cy="36.5" rx="1.300" ry="2" fill="#FFA040"/></svg>
<svg style="left:1477.5px;top:932px;" width="14" height="16" viewBox="0 0 14 16"><path d="M0 8 13.500 0v16z" fill="#FFFFFF"/></svg>
<svg style="left:1576px;top:933px;" width="14" height="14" viewBox="0 0 14 14"><circle cx="7" cy="7" r="7" fill="#FFFFFF"/></svg>
<div style="left:1673.5px;top:933.5px;width:13px;height:13px;background:#FFFFFF;border-radius:1px"></div>
</div></body></html>
